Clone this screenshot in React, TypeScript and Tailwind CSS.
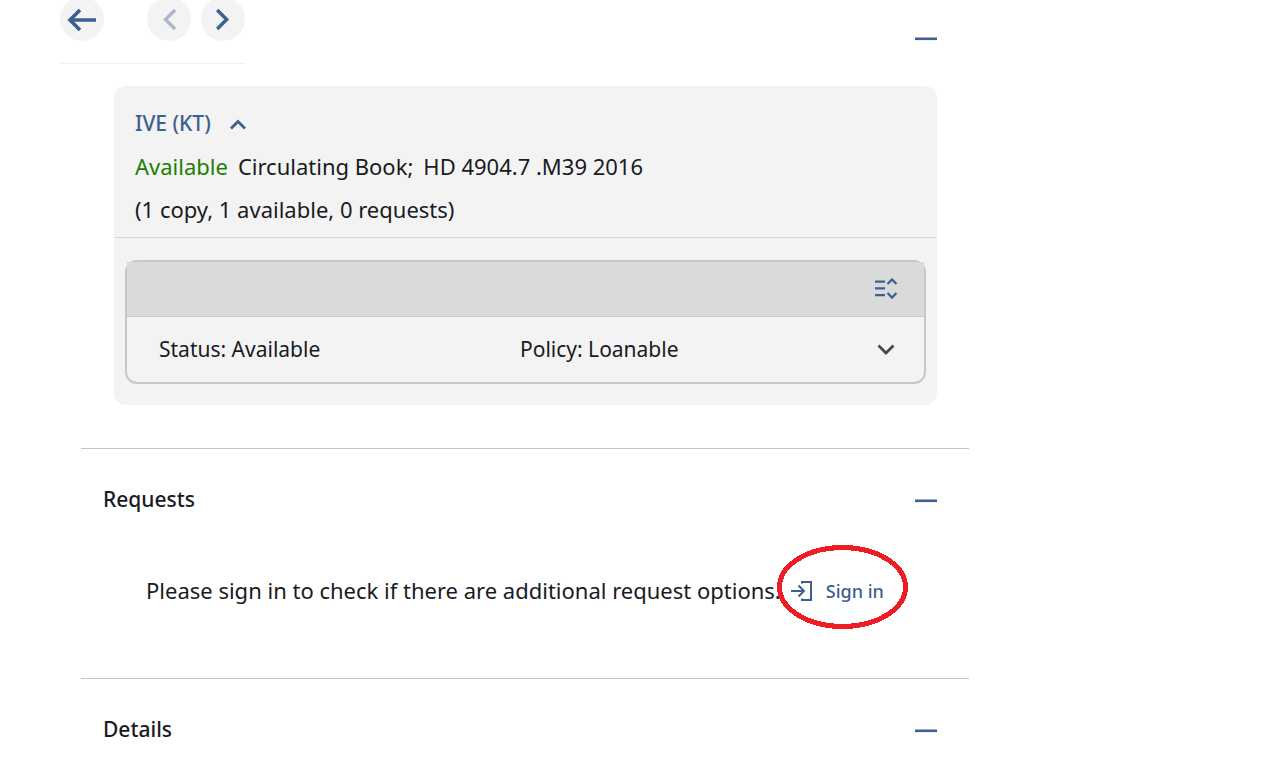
import { useState } from "react";
import type { ReactNode } from "react";

const icon = {
  fill: "none",
  stroke: "currentColor",
  "aria-hidden": true,
} as const;

function NavButton({ label, disabled, children }: { label: string; disabled?: boolean; children: ReactNode }) {
  return (
    <button
      type="button"
      aria-label={label}
      disabled={disabled}
      className="flex size-11 items-center justify-center rounded-full bg-[#f3f3f3] text-[#3d6090] disabled:text-[#abb9cc]"
    >
      {children}
    </button>
  );
}

function CollapseButton({ label, open, onClick }: { label: string; open: boolean; onClick: () => void }) {
  return (
    <button
      type="button"
      aria-label={label}
      aria-expanded={open}
      onClick={onClick}
      className="flex h-8 w-[22px] items-center text-[#3d6090]"
    >
      <svg {...icon} width="22" height="4" viewBox="0 0 22 4">
        <path d="M0 1.8H22" strokeWidth="2.6" />
      </svg>
    </button>
  );
}

function Section({ title, children }: { title: string; children?: ReactNode }) {
  const [open, setOpen] = useState(true);
  return (
    <section className="ml-[81px] border-t border-[#c2c2cc] pl-[22px] pr-8 pt-[34px]">
      <div className="flex h-8 items-center justify-between">
        <h2 className="text-[21px] font-medium leading-8">{title}</h2>
        <div className="pt-1">
          <CollapseButton label={`Toggle ${title}`} open={open} onClick={() => setOpen(!open)} />
        </div>
      </div>
      {open && children}
    </section>
  );
}

export default function App() {
  const [open, setOpen] = useState(true);
  return (
    <main className="w-full max-w-[969px] font-['Noto_Sans',sans-serif] text-[22px] text-[#1a1a1f]">
      <header className="flex items-start justify-between pl-[60px] pr-8">
        <nav aria-label="Record navigation" className="-mt-[3px] flex h-[67px] items-start border-b border-[#f0f0f0]">
          <NavButton label="Back">
            <svg {...icon} width="30" height="24" viewBox="0 0 30 24" strokeWidth="3.6">
              <path d="M29 13H4M13 3L3 13L13 23" />
            </svg>
          </NavButton>
          <div className="ml-[43px] flex gap-2.5">
            <NavButton label="Previous record" disabled>
              <svg {...icon} width="14" height="24" viewBox="0 0 14 24" strokeWidth="3.4">
                <path d="M13 3L3.5 12.5L13 22" />
              </svg>
            </NavButton>
            <NavButton label="Next record">
              <svg {...icon} width="14" height="24" viewBox="0 0 14 24" strokeWidth="3.4">
                <path d="M1.2 3L10.7 12.5L1.2 22" />
              </svg>
            </NavButton>
          </div>
        </nav>
        <div className="pt-[23px]">
          <CollapseButton label="Toggle locations" open={open} onClick={() => setOpen(!open)} />
        </div>
      </header>

      {open && (
        <section className="mb-[43px] ml-[114px] mr-8 mt-[22px] rounded-xl bg-[#f3f3f3]">
          <div className="border-b border-[#d6d6d6] px-[21px] pb-1.5 pt-4 leading-[43px]">
            <button type="button" className="flex items-center gap-[19px] text-[21px] font-medium text-[#3d6090]">
              IVE (KT)
              <svg {...icon} width="16" height="12" viewBox="0 0 16 12" strokeWidth="2.8">
                <path d="M1 10.5L8 3.5L15 10.5" />
              </svg>
            </button>
            <p className="flex flex-wrap gap-x-2.5">
              <span className="text-[#1b7f00]">Available</span>
              <span>Circulating Book;</span>
              <span>HD 4904.7 .M39 2016</span>
            </p>
            <p>(1 copy, 1 available, 0 requests)</p>
          </div>
          <div className="px-[11px] pb-[21px] pt-[22px]">
            <div className="rounded-xl border-2 border-[#c7c7c7]">
              <div className="flex h-[55px] items-center justify-end border-b border-[#c7c7c7] bg-[#dadada] pr-[26px]">
                <button type="button" aria-label="Expand all items" className="text-[#3d6090]">
                  <svg {...icon} width="24" height="22" viewBox="0 0 24 22" strokeWidth="2.3">
                    <path d="M1 3.6H11M1 10.4H11M1 17.2H11M13.5 6L18 1.5L22.5 6M13.5 15L18 19.5L22.5 15" />
                  </svg>
                </button>
              </div>
              <div className="flex h-[65px] items-center pl-8 pr-[29px] text-[21px]">
                <div className="grid flex-1 grid-cols-2 gap-x-1">
                  <span>Status: Available</span>
                  <span>Policy: Loanable</span>
                </div>
                <button type="button" aria-label="Show item details" className="text-[#44484f]">
                  <svg {...icon} width="18" height="12" viewBox="0 0 18 12" strokeWidth="2.8">
                    <path d="M1.5 1.5L9 9L16.5 1.5" />
                  </svg>
                </button>
              </div>
            </div>
          </div>
        </section>
      )}

      <Section title="Requests">
        <div className="flex items-center gap-2.5 pb-[71px] pl-[43px] pt-[59px]">
          <p>Please sign in to check if there are additional request options.</p>
          <div className="relative shrink-0">
            <button type="button" className="flex items-center gap-3.5 text-[18px] font-medium leading-8 text-[#3d6090]">
              <svg {...icon} width="21" height="22" viewBox="0 0 21 22" strokeWidth="2">
                <path d="M0 11H12M7.5 5.5L13 11L7.5 16.5M11 3.5V2H20V20H11V18.5" />
              </svg>
              Sign in
            </button>
            <svg
              {...icon}
              className="pointer-events-none absolute -left-3.5 -top-[30px] h-[84px] w-[131px] max-w-none text-[#ee1c25]"
              viewBox="0 0 131 84"
              strokeWidth="5"
              shapeRendering="crispEdges"
            >
              <ellipse cx="65.5" cy="42" rx="63" ry="39.5" />
            </svg>
          </div>
        </div>
      </Section>

      <Section title="Details" />
    </main>
  );
}
